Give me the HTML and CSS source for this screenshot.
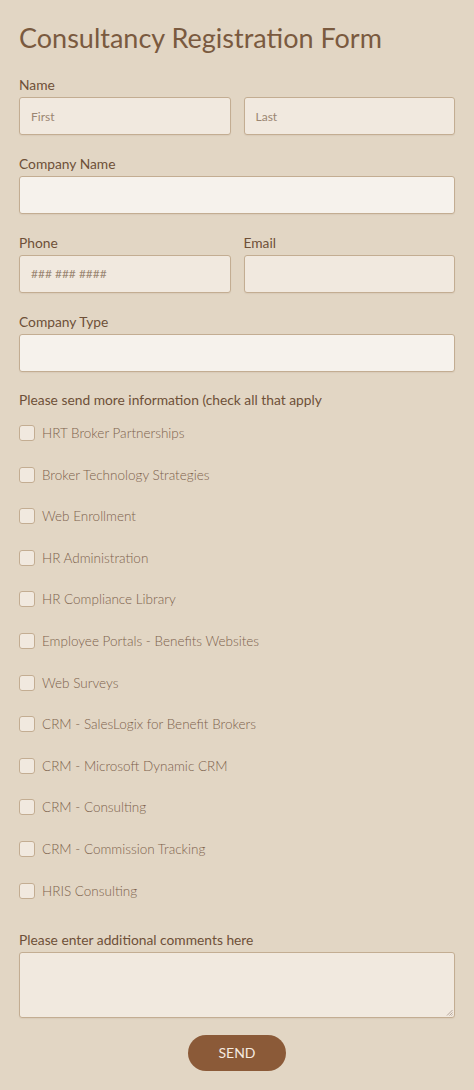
FILE: index.html
```html
<!DOCTYPE html>
<html>
<head>
<meta charset="utf-8">
<link rel="stylesheet" href="styles.css">
</head>
<body>
<form class="form">
  <h1 class="title">Consultancy Registration Form</h1>

  <div class="field">
    <label class="label">Name</label>
    <div class="row">
      <div class="input tinted"><span class="ph">First</span></div>
      <div class="input tinted"><span class="ph">Last</span></div>
    </div>
  </div>

  <div class="field">
    <label class="label">Company Name</label>
    <div class="input light"></div>
  </div>

  <div class="row">
    <div class="field">
      <label class="label">Phone</label>
      <div class="input tinted"><span class="ph">### ### ####</span></div>
    </div>
    <div class="field">
      <label class="label">Email</label>
      <div class="input tinted"></div>
    </div>
  </div>

  <div class="field">
    <label class="label">Company Type</label>
    <div class="input light"></div>
  </div>

  <div class="field">
    <label class="label">Please send more information (check all that apply</label>
    <ul class="checks">
      <li class="check"><span class="box"></span>HRT Broker Partnerships</li>
      <li class="check"><span class="box"></span>Broker Technology Strategies</li>
      <li class="check"><span class="box"></span>Web Enrollment</li>
      <li class="check"><span class="box"></span>HR Administration</li>
      <li class="check"><span class="box"></span>HR Compliance Library</li>
      <li class="check"><span class="box"></span>Employee Portals - Benefits Websites</li>
      <li class="check"><span class="box"></span>Web Surveys</li>
      <li class="check"><span class="box"></span>CRM - SalesLogix for Benefit Brokers</li>
      <li class="check"><span class="box"></span>CRM - Microsoft Dynamic CRM</li>
      <li class="check"><span class="box"></span>CRM - Consulting</li>
      <li class="check"><span class="box"></span>CRM - Commission Tracking</li>
      <li class="check"><span class="box"></span>HRIS Consulting</li>
    </ul>
  </div>

  <div class="field">
    <label class="label">Please enter additional comments here</label>
    <div class="input tinted textarea">
      <svg class="grip" width="7" height="7" viewBox="0 0 7 7"><path d="M6.5 1 L1 6.5 M6.5 3.5 L3.5 6.5 M6.5 5.5 L5.5 6.5" stroke="#a8968a" stroke-width="0.8" fill="none"/></svg>
    </div>
  </div>

  <div class="actions">
    <button type="button" class="send">SEND</button>
  </div>
</form>
</body>
</html>
```

FILE: styles.css
```css
html, body {
  margin: 0;
  padding: 0;
  background: #e2d6c4;
}
body {
  font-family: "Lato", "Noto Sans", sans-serif;
  color: #6e5038;
}
.form {
  display: flex;
  flex-direction: column;
  gap: 19.7px;
  padding: 20.8px 19px 20px;
  width: 436px;
}
.title {
  margin: 0 0 2px;
  font-size: 27px;
  line-height: 34px;
  font-weight: 400;
  color: #7a5a3f;
}
.field {
  display: flex;
  flex-direction: column;
  gap: 4px;
  min-width: 0;
}
.label {
  font-size: 13.8px;
  line-height: 17px;
  color: #6e5038;
}
.row {
  display: grid;
  grid-template-columns: 1fr 1fr;
  column-gap: 13px;
}
.input {
  box-sizing: border-box;
  height: 38px;
  border: 1px solid #c3ad92;
  border-radius: 3px;
  display: flex;
  align-items: center;
  padding: 0 11px;
  box-shadow: 0 1px 1px rgba(120, 90, 60, 0.08);
}
.tinted { background: #f1e9df; }
.light { background: #f6f2ec; }
.ph {
  font-size: 12px;
  color: #9b8672;
}
.checks {
  list-style: none;
  margin: 0;
  padding: 0;
  display: flex;
  flex-direction: column;
}
.check {
  height: 41.6px;
  display: flex;
  align-items: center;
  gap: 7px;
  font-size: 13.5px;
  font-weight: 300;
  color: #7d624c;
}
.box {
  box-sizing: border-box;
  width: 16px;
  height: 16px;
  border: 1px solid #c3ad92;
  border-radius: 3px;
  background: #f1e9df;
  flex: none;
}
.textarea {
  height: 66px;
  position: relative;
}
.grip {
  position: absolute;
  right: 1px;
  bottom: 1px;
}
.actions {
  display: flex;
  justify-content: center;
  margin-top: -3px;
}
.send {
  width: 98px;
  height: 36px;
  border: none;
  border-radius: 18px;
  background: #8b5a38;
  color: #f5ebe0;
  font-family: "Lato", "Noto Sans", sans-serif;
  font-size: 14px;
}
```
